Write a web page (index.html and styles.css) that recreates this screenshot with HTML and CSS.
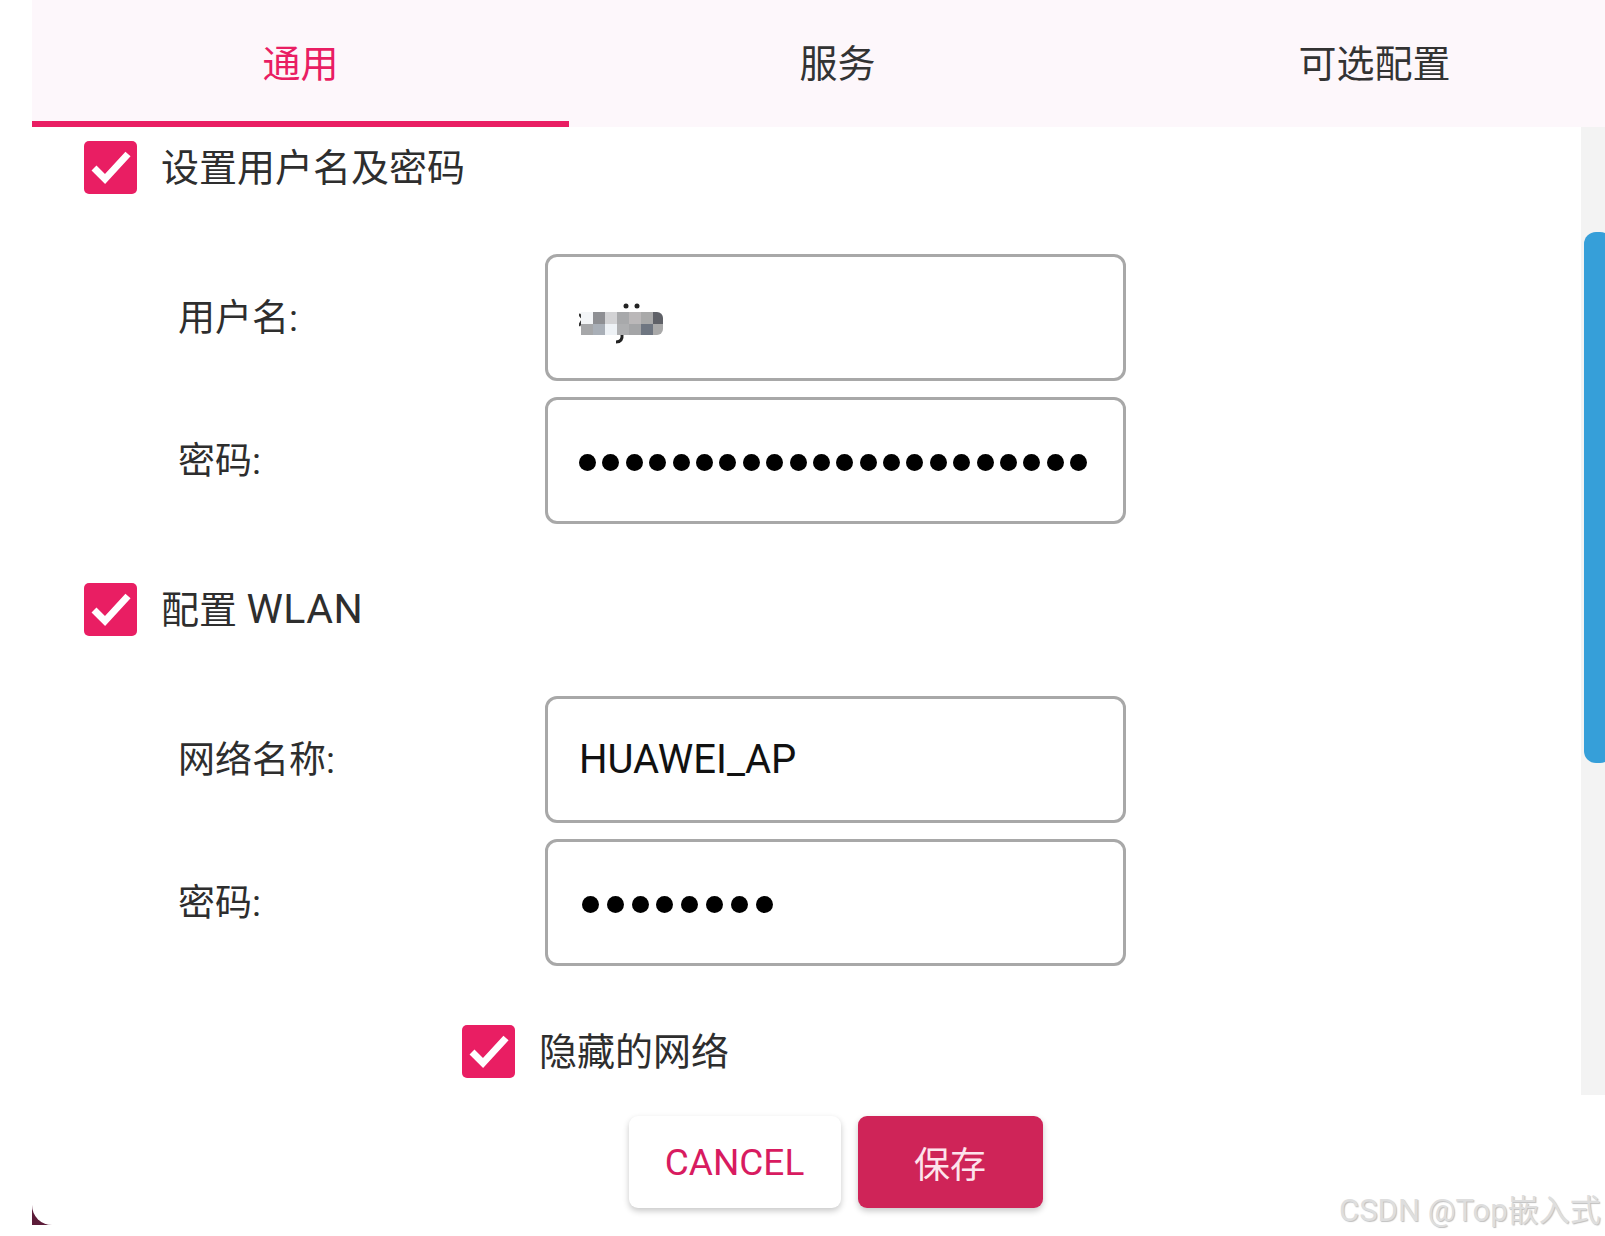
FILE: index.html
```html
<!DOCTYPE html>
<html lang="zh-CN">
<head>
    <meta charset="UTF-8">
    <meta name="viewport" content="width=device-width, initial-scale=1.0">
    <title>设置</title>
    <link rel="stylesheet" href="styles.css">
</head>
<body>

    <!-- ======= Dialog ======= -->
    <div class="frame">
        <div class="dialog">

            <!-- ======= Tabs ======= -->
            <nav class="tabs">
                <div class="tab active">通用</div>
                <div class="tab">服务</div>
                <div class="tab">可选配置</div>
            </nav>

            <!-- ======= Settings ======= -->
            <div class="panel">
                <div class="content">
                    <div class="check-row">
                        <span class="box">
                            <svg viewBox="0 0 53 53" width="53" height="53"><path d="M10 27 L21 38 L44 13" fill="none" stroke="#fff" stroke-width="7"/></svg>
                        </span>
                        <span class="check-label">设置用户名及密码</span>
                    </div>

                    <div class="fields">
                        <div class="field">
                            <span class="field-label">用户名:</span>
                            <div class="input">
                                <svg class="mosaic" viewBox="0 0 90 50" width="90" height="50">
                                    <circle cx="47" cy="11" r="2.5" fill="#222"/>
                                    <circle cx="58" cy="11" r="2.5" fill="#222"/>
                                    <path d="M43 39 Q44 47 37 47" fill="none" stroke="#222" stroke-width="3"/>
                                    <path d="M0 19 L4 24 L0 31" fill="none" stroke="#333" stroke-width="2.5"/>
                                    <rect x="2" y="17" width="12" height="12" fill="#f3f5f7"/>
                                    <rect x="14" y="17" width="12" height="12" fill="#8e8f93"/>
                                    <rect x="26" y="17" width="12" height="12" fill="#d3d3d5"/>
                                    <rect x="38" y="17" width="12" height="12" fill="#a8a9ab"/>
                                    <rect x="50" y="17" width="12" height="12" fill="#bbb8b9"/>
                                    <rect x="62" y="17" width="12" height="12" fill="#a9a9a9"/>
                                    <path d="M74 17 H78 A6 6 0 0 1 84 23 V29 H74 Z" fill="#5f6167"/>
                                    <rect x="2" y="29" width="12" height="11" fill="#a6a7a9"/>
                                    <rect x="14" y="29" width="12" height="11" fill="#a9afb7"/>
                                    <rect x="26" y="29" width="12" height="11" fill="#eef2f6"/>
                                    <rect x="38" y="29" width="12" height="11" fill="#aeafb1"/>
                                    <rect x="50" y="29" width="12" height="11" fill="#a4a5a7"/>
                                    <rect x="62" y="29" width="12" height="11" fill="#6f7681"/>
                                    <path d="M74 29 H84 V34 A6 6 0 0 1 78 40 H74 Z" fill="#a9a9a9"/>
                                </svg>
                            </div>
                        </div>
                        <div class="field">
                            <span class="field-label">密码:</span>
                            <div class="input">
                                <div class="dots">
                                    <i></i><i></i><i></i><i></i><i></i><i></i><i></i><i></i><i></i><i></i><i></i>
                                    <i></i><i></i><i></i><i></i><i></i><i></i><i></i><i></i><i></i><i></i><i></i>
                                </div>
                            </div>
                        </div>
                    </div>

                    <div class="check-row">
                        <span class="box">
                            <svg viewBox="0 0 53 53" width="53" height="53"><path d="M10 27 L21 38 L44 13" fill="none" stroke="#fff" stroke-width="7"/></svg>
                        </span>
                        <span class="check-label">配置 <span class="latin">WLAN</span></span>
                    </div>

                    <div class="fields">
                        <div class="field">
                            <span class="field-label">网络名称:</span>
                            <div class="input">HUAWEI_AP</div>
                        </div>
                        <div class="field">
                            <span class="field-label">密码:</span>
                            <div class="input">
                                <div class="dots wide">
                                    <i></i><i></i><i></i><i></i><i></i><i></i><i></i><i></i>
                                </div>
                            </div>
                        </div>
                    </div>

                    <div class="check-row nested">
                        <span class="box">
                            <svg viewBox="0 0 53 53" width="53" height="53"><path d="M10 27 L21 38 L44 13" fill="none" stroke="#fff" stroke-width="7"/></svg>
                        </span>
                        <span class="check-label">隐藏的网络</span>
                    </div>
                </div>

                <div class="scrollbar"><div class="thumb"></div></div>
            </div>

            <!-- ======= Actions ======= -->
            <div class="actions">
                <button class="btn btn-cancel">CANCEL</button>
                <button class="btn btn-save">保存</button>
            </div>
        </div>
    </div>

    <div class="watermark">CSDN @Top嵌入式</div>

</body>
</html>
```

FILE: styles.css
```css
body {
    margin: 0;
    height: 1236px;
    overflow: hidden;
    position: relative;
    background-color: #fff;
    font-family: Roboto, "Noto Sans CJK SC", sans-serif;
    color: #2e2e2e;
}

.frame {
    margin-left: 32px;
    width: 1611px;
    height: 1225px;
    background-color: #5c1c39;
}

.dialog {
    height: 100%;
    background-color: #fff;
    border-bottom-left-radius: 20px;
    display: flex;
    flex-direction: column;
}

/* tabs */
.tabs {
    display: grid;
    grid-template-columns: repeat(3, 1fr);
    height: 127px;
    background-color: #fdf7fb;
}

.tab {
    display: flex;
    align-items: center;
    justify-content: center;
    box-sizing: border-box;
    padding-bottom: 1px;
    font-size: 38px;
    color: #333;
    border-bottom: 6px solid transparent;
}

.tab.active {
    color: #e91e63;
    border-bottom-color: #e91e63;
}

/* scrolling panel */
.panel {
    display: flex;
    width: 1573px;
    height: 968px;
}

.content {
    flex: 1;
    padding: 14px 0 0 52px;
}

.scrollbar {
    width: 24px;
    background-color: #f3f3f3;
    overflow: hidden;
}

.thumb {
    width: 28px;
    height: 531px;
    margin: 105px 0 0 3px;
    background-color: #369fd9;
    border-radius: 12px;
}

.check-row {
    display: flex;
    align-items: center;
    gap: 24px;
    height: 53px;
    font-size: 38px;
    color: #2e2e2e;
}

.check-label {
    padding-bottom: 6px;
}

.check-label .latin {
    font-size: 41px;
    letter-spacing: 0.5px;
}

.check-row.nested {
    margin-left: 378px;
}

.box {
    width: 53px;
    height: 53px;
    border-radius: 5px;
    background-color: #e91e63;
    display: flex;
}

.fields {
    display: flex;
    flex-direction: column;
    gap: 16px;
    margin: 60px 0 59px 94px;
}

.field {
    display: grid;
    grid-template-columns: 367px 581px;
    align-items: center;
    height: 127px;
}

.field-label {
    font-size: 37px;
    color: #2e2e2e;
    padding-bottom: 6px;
}

.input {
    height: 127px;
    box-sizing: border-box;
    border: 3px solid #a8a8a8;
    border-radius: 12px;
    display: flex;
    align-items: center;
    padding: 0 0 0 31px;
    font-size: 40px;
    color: #111;
}

.mosaic {
    display: block;
    margin-top: 4px;
}

.dots {
    display: flex;
    gap: 6.4px;
    margin-top: 4px;
}

.dots.wide {
    gap: 7.8px;
    margin-left: 3px;
}

.dots i {
    width: 17px;
    height: 17px;
    border-radius: 50%;
    background-color: #000;
}

/* footer buttons */
.actions {
    display: flex;
    justify-content: center;
    gap: 17px;
    padding-top: 21px;
    padding-right: 4px;
}

.btn {
    height: 92px;
    border: none;
    border-radius: 9px;
    font-family: inherit;
    box-shadow: 0 3px 6px rgba(0, 0, 0, 0.22);
    cursor: pointer;
}

.btn-cancel {
    width: 212px;
    background-color: #fff;
    color: #d81b60;
    font-size: 37px;
}

.btn-save {
    width: 185px;
    background-color: #cf2458;
    color: #fde4ec;
    font-size: 36px;
}

.watermark {
    position: absolute;
    left: 1339px;
    top: 1185px;
    font-size: 31px;
    color: #dedede;
    text-shadow: 1px 1px 1px rgba(0, 0, 0, 0.25);
    white-space: nowrap;
}
```
